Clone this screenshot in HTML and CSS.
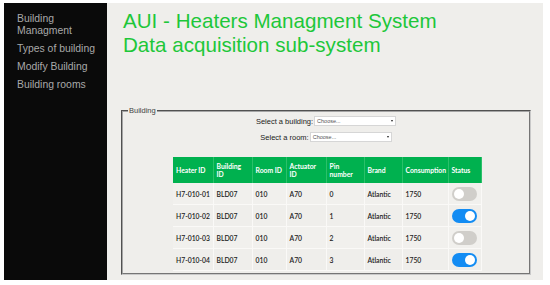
FILE: index.html
```html
<!DOCTYPE html>
<html>
<head>
<meta charset="utf-8">
<link rel="stylesheet" href="styles.css">
</head>
<body>
<div class="page">
  <nav class="sidebar">
    <a class="nav-item">Building<br>Managment</a>
    <a class="nav-item">Types of building</a>
    <a class="nav-item">Modify Building</a>
    <a class="nav-item">Building rooms</a>
  </nav>
  <main class="main">
    <h1 class="title">AUI - Heaters Managment System<br>Data acquisition sub-system</h1>
    <fieldset class="box">
      <legend class="legend">Building</legend>
      <div class="select-row"><span class="lbl">Select a building:</span><span class="sel sel-b">Choose...<i class="arr"></i></span></div>
      <div class="select-row room"><span class="lbl">Select a room:</span><span class="sel sel-r">Choose...<i class="arr"></i></span></div>
      <table class="tbl">
        <colgroup>
          <col class="c1"><col class="c2"><col class="c3"><col class="c4"><col class="c5"><col class="c6"><col class="c7"><col class="c8">
        </colgroup>
        <thead>
          <tr><th>Heater ID</th><th>Building ID</th><th>Room ID</th><th>Actuator ID</th><th>Pin number</th><th>Brand</th><th>Consumption</th><th>Status</th></tr>
        </thead>
        <tbody>
          <tr><td>H7-010-01</td><td>BLD07</td><td>010</td><td>A70</td><td>0</td><td>Atlantic</td><td>1750</td><td><span class="tg"></span></td></tr>
          <tr><td>H7-010-02</td><td>BLD07</td><td>010</td><td>A70</td><td>1</td><td>Atlantic</td><td>1750</td><td><span class="tg on"></span></td></tr>
          <tr><td>H7-010-03</td><td>BLD07</td><td>010</td><td>A70</td><td>2</td><td>Atlantic</td><td>1750</td><td><span class="tg"></span></td></tr>
          <tr><td>H7-010-04</td><td>BLD07</td><td>010</td><td>A70</td><td>3</td><td>Atlantic</td><td>1750</td><td><span class="tg on"></span></td></tr>
        </tbody>
      </table>
    </fieldset>
  </main>
</div>
</body>
</html>
```
FILE: styles.css
```css
html, body { margin: 0; padding: 0; background: #fff; }
body { font-family: "Liberation Sans", Arial, sans-serif; }
.page { display: flex; padding: 3px 7px 5px 4px; height: 277px; }
.sidebar { width: 103px; background: #0a0a0a; display: flex; flex-direction: column; padding: 10px 0 0 13px; box-sizing: border-box; }
.nav-item { color: #a9a9a9; font-size: 10.4px; line-height: 12px; margin-bottom: 6px; }
.main { flex: 1; background: #efeeeb; padding: 0 12px 0 14px; display: flex; flex-direction: column; }
.title { margin: 6px 0 0 2px; font-weight: normal; color: #1dc73a; font-size: 20.6px; line-height: 24px; }
.box { margin: 49px 0 0 0; border: 2px groove #bdbdbd; border-color: #a5a5a5 #c9c9c9 #c9c9c9 #a5a5a5; padding: 0 0 2px 0; }
.legend { font-size: 7.5px; color: #444; padding: 0 1px; margin-left: 5px; }
.select-row { display: flex; justify-content: center; align-items: center; font-size: 7.5px; color: #222; margin-top: 1px; }
.select-row.room { margin-top: 6px; }
.lbl { margin-right: 1px; }
.sel { display: inline-flex; align-items: center; justify-content: space-between; background: #fff; border: 1px solid #d6d6d6; height: 8px; font-size: 5.5px; color: #555; padding: 0 2px; box-sizing: content-box; }
.sel-b { width: 76px; }
.sel-r { width: 76px; }
.arr { width: 0; height: 0; border-left: 1.5px solid transparent; border-right: 1.5px solid transparent; border-top: 2px solid #222; }
.tbl { margin: 15px 0 0 50px; border-collapse: collapse; table-layout: fixed; width: 308px; font-family: Lato, "Open Sans", sans-serif; font-size: 6.8px; color: #222; }
.c1 { width: 40px; } .c2 { width: 39px; } .c3 { width: 34px; } .c4 { width: 40px; }
.c5 { width: 38px; } .c6 { width: 38px; } .c7 { width: 46px; } .c8 { width: 33px; }
.tbl th { background: #00b14f; color: #fff; text-align: left; font-weight: bold; height: 26px; padding: 0 3px; line-height: 8px; border-right: 1px solid #2bc06a; white-space: normal; }
.tbl td { height: 21px; padding: 0 3px; border-right: 1px solid #faf9f7; border-bottom: 1px solid #faf9f7; background: #efeeeb; white-space: nowrap; overflow: hidden; font-weight: 600; }
.tbl tbody tr:nth-child(odd) td { background: #f1f0ed; }
.tg { display: block; position: relative; width: 25px; height: 14px; border-radius: 7px; background: #d0ceca; }
.tg::after { content: ""; position: absolute; left: 2px; top: 2px; width: 10px; height: 10px; border-radius: 50%; background: #fff; }
.tg.on { background: #138cf3; }
.tg.on::after { left: 13px; }
```
